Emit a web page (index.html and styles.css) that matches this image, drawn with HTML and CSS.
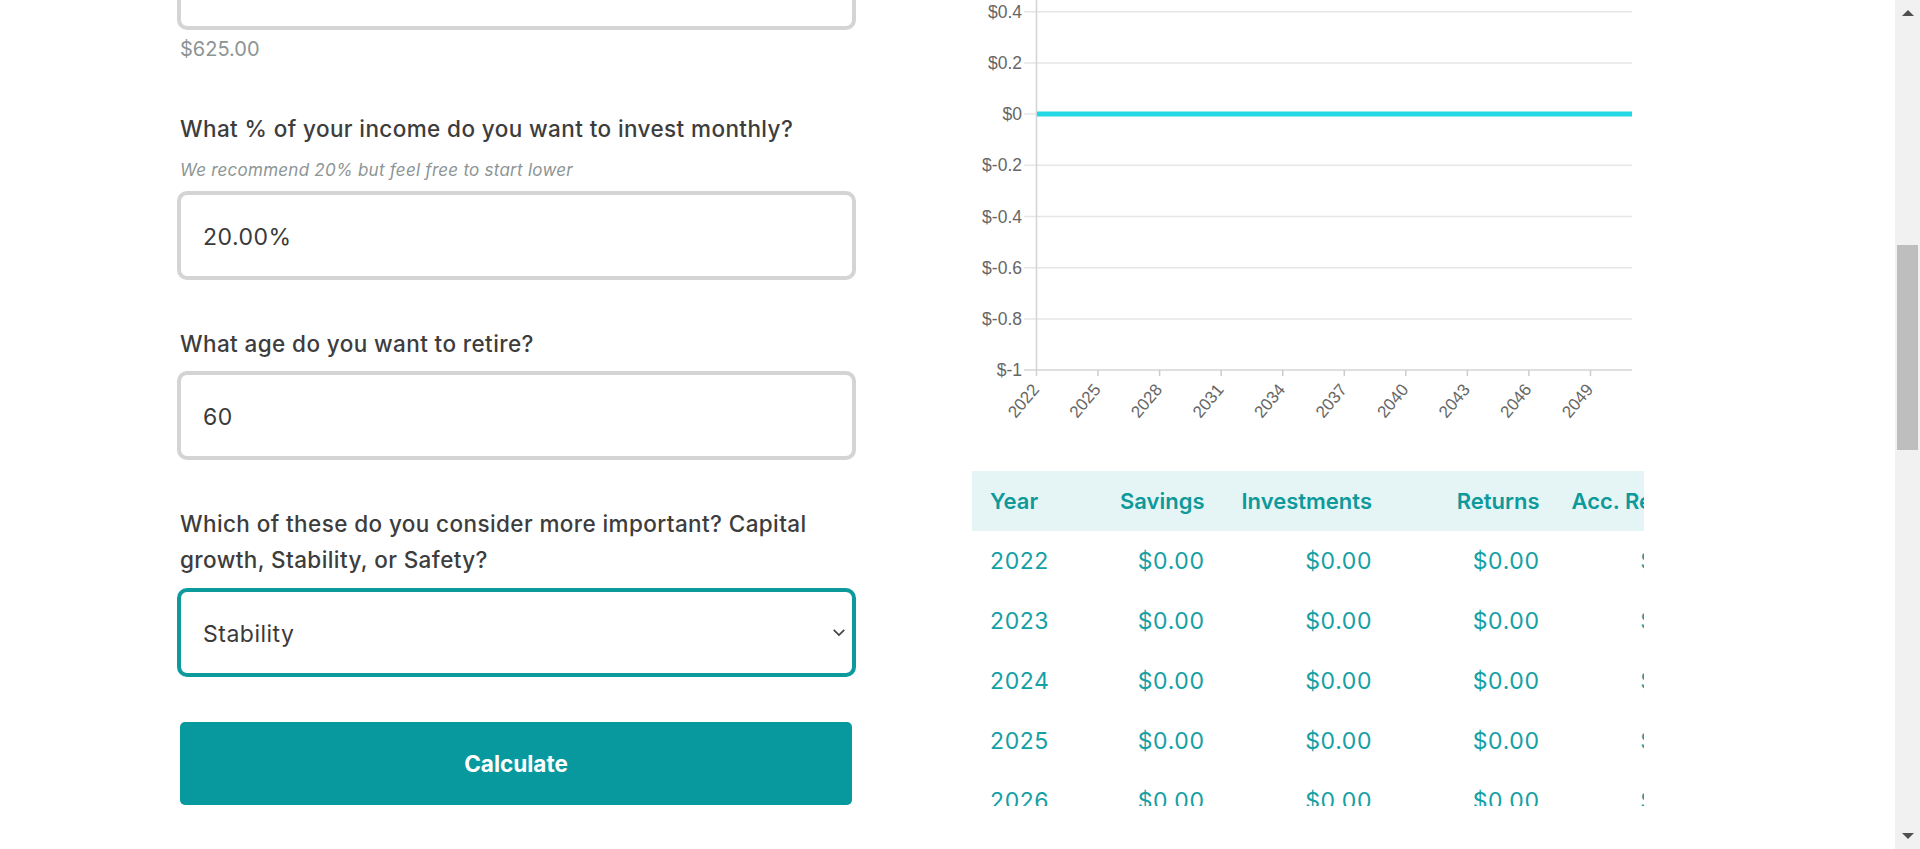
FILE: index.html
```html
<!DOCTYPE html>
<html lang="en">
<head>
<meta charset="utf-8">
<title>Investment calculator</title>
<link rel="stylesheet" href="styles.css">
</head>
<body>
<div class="page">
  <section class="form">
    <div class="input first"></div>
    <div class="amount">$625.00</div>

    <label class="label l1">What % of your income do you want to invest monthly?</label>
    <div class="hint">We recommend 20% but feel free to start lower</div>
    <input class="input i2" type="text" value="20.00%">

    <label class="label l2">What age do you want to retire?</label>
    <input class="input i3" type="text" value="60">

    <label class="label l3">Which of these do you consider more important? Capital<br>growth, Stability, or Safety?</label>
    <div class="select-wrap">
      <select class="input select">
        <option>Capital growth</option>
        <option selected>Stability</option>
        <option>Safety</option>
      </select>
      <svg class="chevron" width="16" height="10" viewBox="0 0 16 10"><path d="M2 2 L8 8 L14 2" fill="none" stroke="#444" stroke-width="2"/></svg>
    </div>

    <button class="calc" type="button">Calculate</button>
  </section>

  <section class="results">
    <svg class="chart" width="672" height="471" viewBox="0 0 672 471">
      <g class="grid">
        <line x1="52" y1="11.7" x2="660" y2="11.7"/>
        <line x1="52" y1="62.9" x2="660" y2="62.9"/>
        <line x1="52" y1="114.1" x2="660" y2="114.1"/>
        <line x1="52" y1="165.3" x2="660" y2="165.3"/>
        <line x1="52" y1="216.5" x2="660" y2="216.5"/>
        <line x1="52" y1="267.7" x2="660" y2="267.7"/>
        <line x1="52" y1="318.9" x2="660" y2="318.9"/>
      </g>
      <line class="axis" x1="64.5" y1="0" x2="64.5" y2="376"/>
      <line class="axis" x1="52" y1="370.1" x2="660" y2="370.1"/>
      <g class="xticks">
        <line x1="126" y1="370" x2="126" y2="376"/>
        <line x1="187.6" y1="370" x2="187.6" y2="376"/>
        <line x1="249.2" y1="370" x2="249.2" y2="376"/>
        <line x1="310.7" y1="370" x2="310.7" y2="376"/>
        <line x1="372.3" y1="370" x2="372.3" y2="376"/>
        <line x1="433.8" y1="370" x2="433.8" y2="376"/>
        <line x1="495.4" y1="370" x2="495.4" y2="376"/>
        <line x1="556.9" y1="370" x2="556.9" y2="376"/>
        <line x1="618.5" y1="370" x2="618.5" y2="376"/>
      </g>
      <g class="ylabels">
        <text x="50" y="17.8">$0.4</text>
        <text x="50" y="69">$0.2</text>
        <text x="50" y="120.2">$0</text>
        <text x="50" y="171.4">$-0.2</text>
        <text x="50" y="222.6">$-0.4</text>
        <text x="50" y="273.8">$-0.6</text>
        <text x="50" y="325">$-0.8</text>
        <text x="50" y="376.2">$-1</text>
      </g>
      <g class="xlabels">
        <text x="68" y="390" transform="rotate(-50 68 390)">2022</text>
        <text x="129.5" y="390" transform="rotate(-50 129.5 390)">2025</text>
        <text x="191.1" y="390" transform="rotate(-50 191.1 390)">2028</text>
        <text x="252.7" y="390" transform="rotate(-50 252.7 390)">2031</text>
        <text x="314.2" y="390" transform="rotate(-50 314.2 390)">2034</text>
        <text x="375.8" y="390" transform="rotate(-50 375.8 390)">2037</text>
        <text x="437.3" y="390" transform="rotate(-50 437.3 390)">2040</text>
        <text x="498.9" y="390" transform="rotate(-50 498.9 390)">2043</text>
        <text x="560.4" y="390" transform="rotate(-50 560.4 390)">2046</text>
        <text x="622" y="390" transform="rotate(-50 622 390)">2049</text>
      </g>
      <line class="series" x1="65" y1="114.1" x2="660" y2="114.1"/>
    </svg>

    <div class="table-wrap">
      <table class="table">
        <colgroup>
          <col class="c-year"><col class="c-sav"><col class="c-num"><col class="c-num"><col class="c-num">
        </colgroup>
        <thead>
          <tr><th class="year">Year</th><th>Savings</th><th>Investments</th><th>Returns</th><th>Acc. Returns</th></tr>
        </thead>
        <tbody>
          <tr><td class="year">2022</td><td>$0.00</td><td>$0.00</td><td>$0.00</td><td>$0.00</td></tr>
          <tr><td class="year">2023</td><td>$0.00</td><td>$0.00</td><td>$0.00</td><td>$0.00</td></tr>
          <tr><td class="year">2024</td><td>$0.00</td><td>$0.00</td><td>$0.00</td><td>$0.00</td></tr>
          <tr><td class="year">2025</td><td>$0.00</td><td>$0.00</td><td>$0.00</td><td>$0.00</td></tr>
          <tr><td class="year">2026</td><td>$0.00</td><td>$0.00</td><td>$0.00</td><td>$0.00</td></tr>
          <tr><td class="year">2027</td><td>$0.00</td><td>$0.00</td><td>$0.00</td><td>$0.00</td></tr>
        </tbody>
      </table>
    </div>
  </section>
</div>

<div class="scrollbar">
  <div class="sb-up"></div>
  <div class="sb-thumb"></div>
  <div class="sb-down"></div>
</div>
</body>
</html>
```

FILE: styles.css
```css
html, body {
  margin: 0;
  padding: 0;
  background: #ffffff;
  overflow: hidden;
  height: 849px;
}

body {
  font-family: Inter, "DejaVu Sans", sans-serif;
  color: #3a3a3a;
}

.page {
  display: flex;
  padding-left: 177px;
  width: 1895px;
  box-sizing: border-box;
}

.form {
  width: 679px;
  display: flex;
  flex-direction: column;
  align-items: stretch;
}

.input {
  display: block;
  box-sizing: border-box;
  width: 679px;
  height: 89px;
  border: 4px solid #d4d4d4;
  border-radius: 10px;
  background: #fff;
  padding: 3px 22px 0;
  font-family: Inter, "DejaVu Sans", sans-serif;
  font-size: 23px;
  letter-spacing: 0.5px;
  color: #3a3a3a;
  outline: none;
  margin: 0;
}

.first {
  margin-top: -59px;
}

.amount {
  margin-top: 7px;
  padding-left: 3px;
  font-size: 20px;
  line-height: 24px;
  color: #8d9494;
}

.label {
  display: block;
  padding-left: 3px;
  font-size: 22.5px;
  line-height: 36px;
  font-weight: 500;
  color: #3d3d3d;
  letter-spacing: 0.4px;
}

.l1 { margin-top: 50px; }
.l2 { margin-top: 46px; }
.l3 { margin-top: 46px; }

.hint {
  margin-top: 11px;
  padding-left: 3px;
  font-size: 17px;
  line-height: 24px;
  font-style: italic;
  letter-spacing: 0.25px;
  color: #8d9595;
}

.i2 { margin-top: 9px; }
.i3 { margin-top: 9px; }

.select-wrap {
  position: relative;
  margin-top: 10px;
}

.select {
  appearance: none;
  -webkit-appearance: none;
  border-color: #0d9a9c;
}

.chevron {
  position: absolute;
  right: 10px;
  top: 40px;
  width: 14px;
  height: 9px;
}

.calc {
  margin: 45px 0 0 3px;
  width: 672px;
  height: 83px;
  border: none;
  border-radius: 5px;
  background: #08999e;
  color: #ffffff;
  font-family: Inter, "DejaVu Sans", sans-serif;
  font-size: 22.5px;
  font-weight: 700;
  letter-spacing: 0;
}

.results {
  margin-left: 116px;
  width: 672px;
}

.chart {
  display: block;
}

.grid line {
  stroke: #e6e6e6;
  stroke-width: 1.5;
}

.axis {
  stroke: #d4d4d4;
  stroke-width: 1.5;
}

.xticks line {
  stroke: #cccccc;
  stroke-width: 1.5;
}

.ylabels text {
  font-family: "Liberation Sans", Arial, sans-serif;
  font-size: 17.5px;
  fill: #666666;
  text-anchor: end;
}

.xlabels text {
  font-family: "Liberation Sans", Arial, sans-serif;
  font-size: 17px;
  fill: #666666;
  text-anchor: end;
}

.series {
  stroke: #22d8e4;
  stroke-width: 5;
}

.table-wrap {
  width: 672px;
  height: 335px;
  overflow: hidden;
}

.table {
  border-collapse: collapse;
  table-layout: fixed;
  width: 751px;
  font-family: Inter, "DejaVu Sans", sans-serif;
  font-size: 22px;
}

.c-year { width: 92px; }
.c-sav { width: 156.5px; }
.c-num { width: 167.5px; }

.table th,
.table td {
  height: 60px;
  padding: 0 16px;
  text-align: right;
  white-space: nowrap;
  box-sizing: border-box;
}

.table th {
  background: #e5f5f5;
  color: #0e999b;
  font-weight: 600;
}

.table td {
  color: #14a0a4;
  font-weight: 400;
  font-size: 23px;
  letter-spacing: 0.6px;
}

.table .year {
  text-align: left;
  padding-left: 18px;
}

.scrollbar {
  position: fixed;
  top: 0;
  right: 0;
  width: 25px;
  height: 849px;
  background: #f1f1f1;
}

.sb-up,
.sb-down {
  position: absolute;
  left: 7px;
  width: 0;
  height: 0;
  border-left: 6px solid transparent;
  border-right: 6px solid transparent;
}

.sb-up {
  top: 10px;
  border-bottom: 6px solid #505050;
}

.sb-down {
  bottom: 10px;
  border-top: 6px solid #505050;
}

.sb-thumb {
  position: absolute;
  left: 2px;
  top: 245px;
  width: 21px;
  height: 205px;
  background: #bebebe;
}
```
